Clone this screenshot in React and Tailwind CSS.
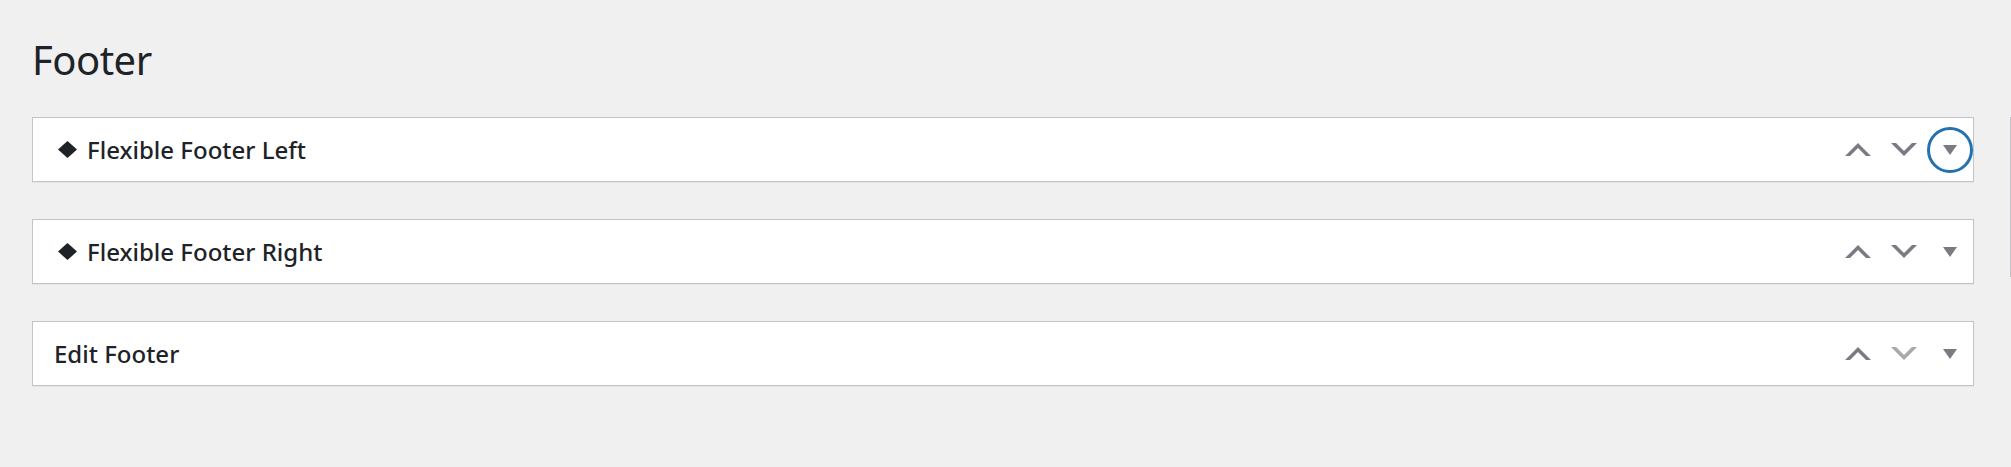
import React from "react";

function Diamond() {
  return (
    <svg width="19" height="17" viewBox="0 0 19 17" className="ml-[4px] mr-[10px] shrink-0">
      <polygon points="9.5,0 19,8.5 9.5,17 0,8.5" fill="#1d2327" />
    </svg>
  );
}

function Chevron({ up, color }) {
  return (
    <svg width="26" height="13" viewBox="0 0 26 13">
      <polygon
        points={
          up
            ? "0,13 13,0 26,13 21,13 13,5 5,13"
            : "0,0 13,13 26,0 21,0 13,8 5,0"
        }
        fill={color}
      />
    </svg>
  );
}

function Caret() {
  return (
    <svg width="14" height="10" viewBox="0 0 14 10">
      <polygon points="0,0 14,0 7,10" fill="#787c82" />
    </svg>
  );
}

function SectionRow({ title, diamond, focused, downDisabled }) {
  return (
    <div className="flex items-center h-[65px] bg-white border border-[#c3c4c7] shadow-[0_1px_1px_rgba(0,0,0,0.04)] pl-[21px]">
      {diamond && <Diamond />}
      <span className="flex-1 text-[24px] font-medium text-[#1d2327]">
        {title}
      </span>
      <div className="flex items-center h-full">
        {/* Move up */}
        <button className="w-[46px] h-[46px] flex items-center justify-center">
          <Chevron up color="#787c82" />
        </button>
        {/* Move down */}
        <button className="w-[46px] h-[46px] flex items-center justify-center">
          <Chevron color={downDisabled ? "#a7aaad" : "#787c82"} />
        </button>
        {/* Toggle */}
        <button
          className={
            "w-[46px] h-[46px] flex items-center justify-center rounded-full " +
            (focused ? "border-[3px] border-[#2271b1]" : "border-[3px] border-transparent")
          }
        >
          <Caret />
        </button>
      </div>
    </div>
  );
}

export default function App() {
  return (
    <div
      className="min-h-screen bg-[#f0f0f1] flex"
      style={{ fontFamily: '"Noto Sans", "Open Sans", sans-serif' }}
    >
      <div className="flex-1 pl-[32px] pr-[36px] pt-[40px]">
        <h1 className="text-[40px] leading-none font-normal text-[#1d2327] tracking-[-0.5px]">
          Footer
        </h1>
        <div className="mt-[37px] flex flex-col gap-[37px]">
          <SectionRow title="Flexible Footer Left" diamond focused />
          <SectionRow title="Flexible Footer Right" diamond />
          <SectionRow title="Edit Footer" downDisabled />
        </div>
      </div>
      <div className="w-px bg-[#c3c4c7] mt-[117px] h-[160px]" />
    </div>
  );
}
